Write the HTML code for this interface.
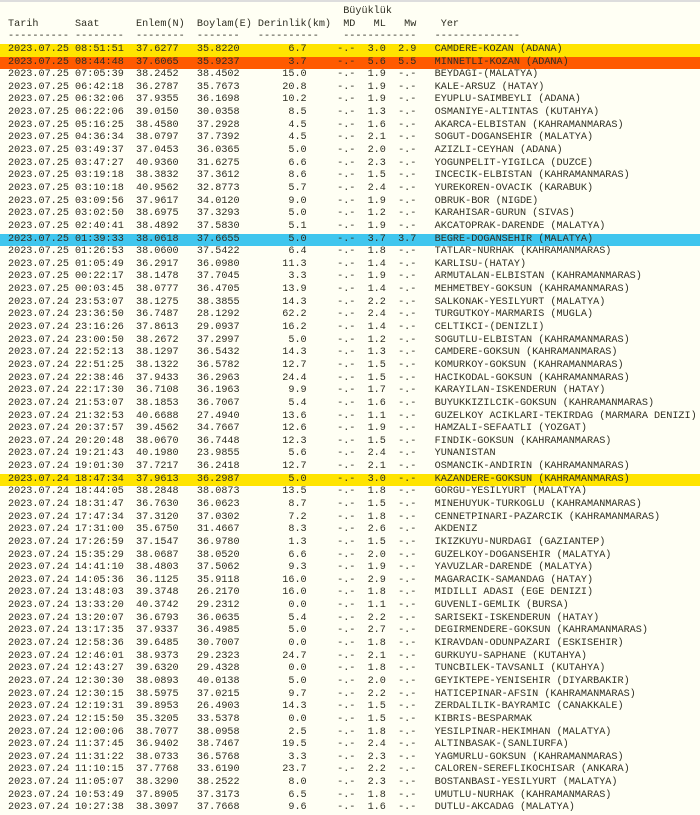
<!DOCTYPE html>
<html><head><meta charset="utf-8"><style>
html,body{margin:0;padding:0;background:#fffff4;width:700px;height:814px;overflow:hidden}
body{border-top:2px solid #ddd;box-sizing:border-box}
.p{position:absolute;top:6px;left:0;width:700px;font-family:"Liberation Mono","DejaVu Sans Mono",monospace;font-size:10.17px;color:#2e2e22}
.p div{white-space:pre;height:12.65px;line-height:12.65px;padding-left:8px}
.y{background:#ffe400}.o{background:#ff5a00}.c{background:#40c6ee}
</style></head><body><div class="p">
<div>                                                       Büyüklük</div>
<div>Tarih      Saat      Enlem(N)  Boylam(E) Derinlik(km)  MD   ML   Mw    Yer</div>
<div>---------- --------  --------  -------   ----------    ------------   --------------</div>
<div class="y">2023.07.25 08:51:51  37.6277   35.8220        6.7     -.-  3.0  2.9   CAMDERE-KOZAN (ADANA)</div>
<div class="o">2023.07.25 08:44:48  37.6065   35.9237        3.7     -.-  5.6  5.5   MINNETLI-KOZAN (ADANA)</div>
<div>2023.07.25 07:05:39  38.2452   38.4502       15.0     -.-  1.9  -.-   BEYDAGI-(MALATYA)</div>
<div>2023.07.25 06:42:18  36.2787   35.7673       20.8     -.-  1.9  -.-   KALE-ARSUZ (HATAY)</div>
<div>2023.07.25 06:32:06  37.9355   36.1698       10.2     -.-  1.9  -.-   EYUPLU-SAIMBEYLI (ADANA)</div>
<div>2023.07.25 06:22:06  39.0150   30.0358        8.5     -.-  1.3  -.-   OSMANIYE-ALTINTAS (KUTAHYA)</div>
<div>2023.07.25 05:16:25  38.4580   37.2928        4.5     -.-  1.6  -.-   AKARCA-ELBISTAN (KAHRAMANMARAS)</div>
<div>2023.07.25 04:36:34  38.0797   37.7392        4.5     -.-  2.1  -.-   SOGUT-DOGANSEHIR (MALATYA)</div>
<div>2023.07.25 03:49:37  37.0453   36.0365        5.0     -.-  2.0  -.-   AZIZLI-CEYHAN (ADANA)</div>
<div>2023.07.25 03:47:27  40.9360   31.6275        6.6     -.-  2.3  -.-   YOGUNPELIT-YIGILCA (DUZCE)</div>
<div>2023.07.25 03:19:18  38.3832   37.3612        8.6     -.-  1.5  -.-   INCECIK-ELBISTAN (KAHRAMANMARAS)</div>
<div>2023.07.25 03:10:18  40.9562   32.8773        5.7     -.-  2.4  -.-   YUREKOREN-OVACIK (KARABUK)</div>
<div>2023.07.25 03:09:56  37.9617   34.0120        9.0     -.-  1.9  -.-   OBRUK-BOR (NIGDE)</div>
<div>2023.07.25 03:02:50  38.6975   37.3293        5.0     -.-  1.2  -.-   KARAHISAR-GURUN (SIVAS)</div>
<div>2023.07.25 02:40:41  38.4892   37.5830        5.1     -.-  1.9  -.-   AKCATOPRAK-DARENDE (MALATYA)</div>
<div class="c">2023.07.25 01:39:33  38.0618   37.6655        5.0     -.-  3.7  3.7   BEGRE-DOGANSEHIR (MALATYA)</div>
<div>2023.07.25 01:26:53  38.0600   37.5422        6.4     -.-  1.8  -.-   TATLAR-NURHAK (KAHRAMANMARAS)</div>
<div>2023.07.25 01:05:49  36.2917   36.0980       11.3     -.-  1.4  -.-   KARLISU-(HATAY)</div>
<div>2023.07.25 00:22:17  38.1478   37.7045        3.3     -.-  1.9  -.-   ARMUTALAN-ELBISTAN (KAHRAMANMARAS)</div>
<div>2023.07.25 00:03:45  38.0777   36.4705       13.9     -.-  1.4  -.-   MEHMETBEY-GOKSUN (KAHRAMANMARAS)</div>
<div>2023.07.24 23:53:07  38.1275   38.3855       14.3     -.-  2.2  -.-   SALKONAK-YESILYURT (MALATYA)</div>
<div>2023.07.24 23:36:50  36.7487   28.1292       62.2     -.-  2.4  -.-   TURGUTKOY-MARMARIS (MUGLA)</div>
<div>2023.07.24 23:16:26  37.8613   29.0937       16.2     -.-  1.4  -.-   CELTIKCI-(DENIZLI)</div>
<div>2023.07.24 23:00:50  38.2672   37.2997        5.0     -.-  1.2  -.-   SOGUTLU-ELBISTAN (KAHRAMANMARAS)</div>
<div>2023.07.24 22:52:13  38.1297   36.5432       14.3     -.-  1.3  -.-   CAMDERE-GOKSUN (KAHRAMANMARAS)</div>
<div>2023.07.24 22:51:25  38.1322   36.5782       12.7     -.-  1.5  -.-   KOMURKOY-GOKSUN (KAHRAMANMARAS)</div>
<div>2023.07.24 22:38:46  37.9433   36.2963       24.4     -.-  1.5  -.-   HACIKODAL-GOKSUN (KAHRAMANMARAS)</div>
<div>2023.07.24 22:17:30  36.7108   36.1963        9.9     -.-  1.7  -.-   KARAYILAN-ISKENDERUN (HATAY)</div>
<div>2023.07.24 21:53:07  38.1853   36.7067        5.4     -.-  1.6  -.-   BUYUKKIZILCIK-GOKSUN (KAHRAMANMARAS)</div>
<div>2023.07.24 21:32:53  40.6688   27.4940       13.6     -.-  1.1  -.-   GUZELKOY ACIKLARI-TEKIRDAG (MARMARA DENIZI)</div>
<div>2023.07.24 20:37:57  39.4562   34.7667       12.6     -.-  1.9  -.-   HAMZALI-SEFAATLI (YOZGAT)</div>
<div>2023.07.24 20:20:48  38.0670   36.7448       12.3     -.-  1.5  -.-   FINDIK-GOKSUN (KAHRAMANMARAS)</div>
<div>2023.07.24 19:21:43  40.1980   23.9855        5.6     -.-  2.4  -.-   YUNANISTAN</div>
<div>2023.07.24 19:01:30  37.7217   36.2418       12.7     -.-  2.1  -.-   OSMANCIK-ANDIRIN (KAHRAMANMARAS)</div>
<div class="y">2023.07.24 18:47:34  37.9613   36.2987        5.0     -.-  3.0  -.-   KAZANDERE-GOKSUN (KAHRAMANMARAS)</div>
<div>2023.07.24 18:44:05  38.2848   38.0873       13.5     -.-  1.8  -.-   GORGU-YESILYURT (MALATYA)</div>
<div>2023.07.24 18:31:47  36.7630   36.0623        8.7     -.-  1.5  -.-   MINEHUYUK-TURKOGLU (KAHRAMANMARAS)</div>
<div>2023.07.24 17:47:34  37.3120   37.0302        7.2     -.-  1.8  -.-   CENNETPINARI-PAZARCIK (KAHRAMANMARAS)</div>
<div>2023.07.24 17:31:00  35.6750   31.4667        8.3     -.-  2.6  -.-   AKDENIZ</div>
<div>2023.07.24 17:26:59  37.1547   36.9780        1.3     -.-  1.5  -.-   IKIZKUYU-NURDAGI (GAZIANTEP)</div>
<div>2023.07.24 15:35:29  38.0687   38.0520        6.6     -.-  2.0  -.-   GUZELKOY-DOGANSEHIR (MALATYA)</div>
<div>2023.07.24 14:41:10  38.4803   37.5062        9.3     -.-  1.9  -.-   YAVUZLAR-DARENDE (MALATYA)</div>
<div>2023.07.24 14:05:36  36.1125   35.9118       16.0     -.-  2.9  -.-   MAGARACIK-SAMANDAG (HATAY)</div>
<div>2023.07.24 13:48:03  39.3748   26.2170       16.0     -.-  1.8  -.-   MIDILLI ADASI (EGE DENIZI)</div>
<div>2023.07.24 13:33:20  40.3742   29.2312        0.0     -.-  1.1  -.-   GUVENLI-GEMLIK (BURSA)</div>
<div>2023.07.24 13:20:07  36.6793   36.0635        5.4     -.-  2.2  -.-   SARISEKI-ISKENDERUN (HATAY)</div>
<div>2023.07.24 13:17:35  37.9337   36.4985        5.0     -.-  2.7  -.-   DEGIRMENDERE-GOKSUN (KAHRAMANMARAS)</div>
<div>2023.07.24 12:58:36  39.6485   30.7007        0.0     -.-  1.8  -.-   KIRAVDAN-ODUNPAZARI (ESKISEHIR)</div>
<div>2023.07.24 12:46:01  38.9373   29.2323       24.7     -.-  2.1  -.-   GURKUYU-SAPHANE (KUTAHYA)</div>
<div>2023.07.24 12:43:27  39.6320   29.4328        0.0     -.-  1.8  -.-   TUNCBILEK-TAVSANLI (KUTAHYA)</div>
<div>2023.07.24 12:30:30  38.0893   40.0138        5.0     -.-  2.0  -.-   GEYIKTEPE-YENISEHIR (DIYARBAKIR)</div>
<div>2023.07.24 12:30:15  38.5975   37.0215        9.7     -.-  2.2  -.-   HATICEPINAR-AFSIN (KAHRAMANMARAS)</div>
<div>2023.07.24 12:19:31  39.8953   26.4903       14.3     -.-  1.5  -.-   ZERDALILIK-BAYRAMIC (CANAKKALE)</div>
<div>2023.07.24 12:15:50  35.3205   33.5378        0.0     -.-  1.5  -.-   KIBRIS-BESPARMAK</div>
<div>2023.07.24 12:00:06  38.7077   38.0958        2.5     -.-  1.8  -.-   YESILPINAR-HEKIMHAN (MALATYA)</div>
<div>2023.07.24 11:37:45  36.9402   38.7467       19.5     -.-  2.4  -.-   ALTINBASAK-(SANLIURFA)</div>
<div>2023.07.24 11:31:22  38.0733   36.5768        3.3     -.-  2.3  -.-   YAGMURLU-GOKSUN (KAHRAMANMARAS)</div>
<div>2023.07.24 11:10:15  37.7768   33.6190       23.7     -.-  2.2  -.-   CALOREN-SEREFLIKOCHISAR (ANKARA)</div>
<div>2023.07.24 11:05:07  38.3290   38.2522        8.0     -.-  2.3  -.-   BOSTANBASI-YESILYURT (MALATYA)</div>
<div>2023.07.24 10:53:49  37.8905   37.3173        6.5     -.-  1.8  -.-   UMUTLU-NURHAK (KAHRAMANMARAS)</div>
<div>2023.07.24 10:27:38  38.3097   37.7668        9.6     -.-  1.6  -.-   DUTLU-AKCADAG (MALATYA)</div>
</div></body></html>
